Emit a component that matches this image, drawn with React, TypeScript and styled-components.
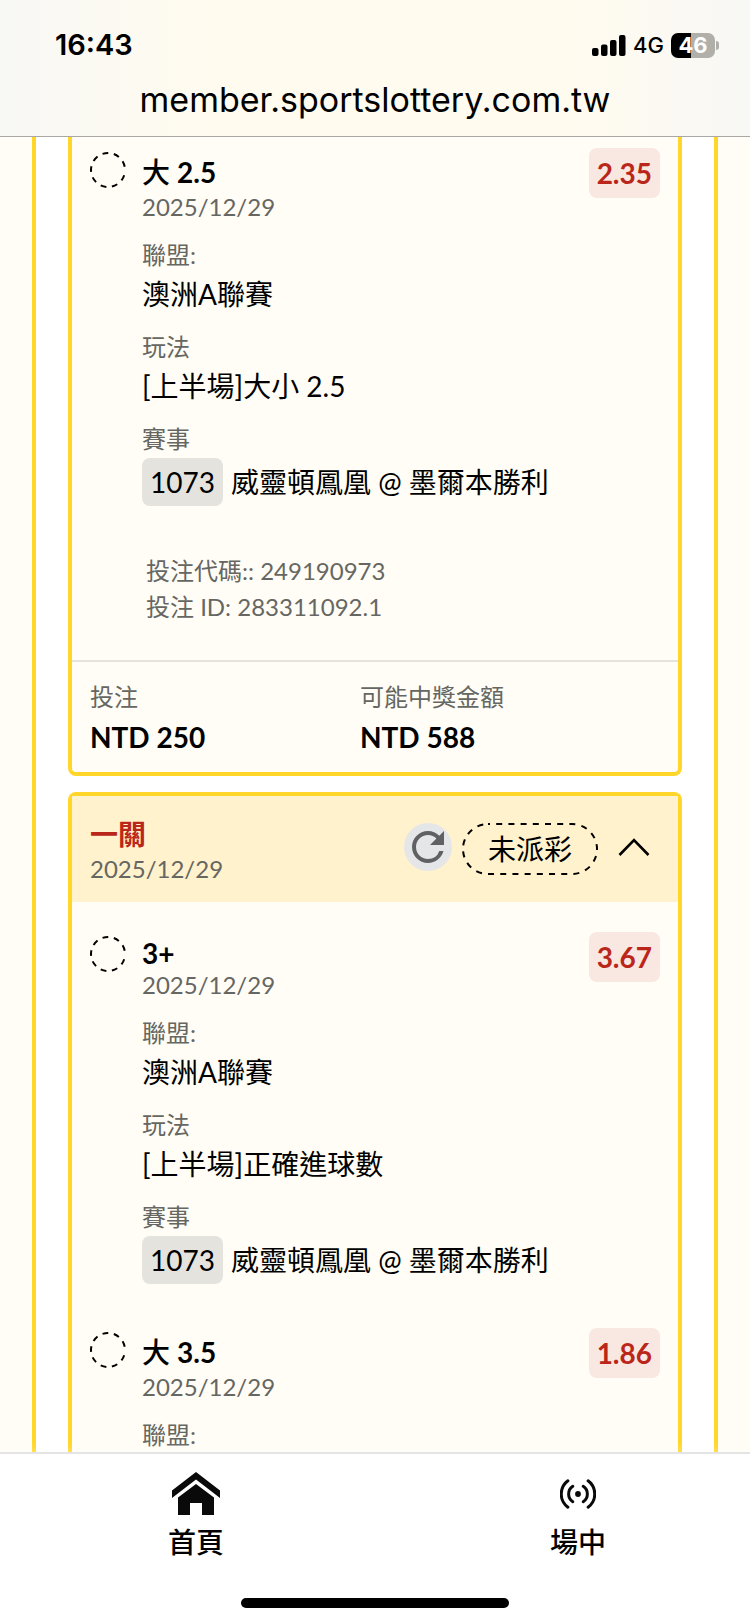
import React from 'react';
import styled, { createGlobalStyle } from 'styled-components';
import { MdRefresh } from 'react-icons/md';

const color = {
  page: '#fffdf5',
  yellow: '#ffd629',
  cream: '#fff2cc',
  red: '#bb261a',
  rose: '#f8e8e1',
  muted: '#666662',
  stone: '#e5e3dd',
  ink: '#000000',
};

const GlobalStyle = createGlobalStyle`
  *, *::before, *::after { box-sizing: border-box; }
  body {
    margin: 0;
    background: ${color.page};
    color: ${color.ink};
    font-family: Lato, "Noto Sans CJK TC", sans-serif;
    font-size: 28px;
    line-height: 40px;
  }
  h2, h3, p, dl, dd { margin: 0; }
  button { font: inherit; color: inherit; }
`;

const Screen = styled.div`
  display: flex;
  flex-direction: column;
  height: 100vh;
  overflow: hidden;
`;

/* ---------- browser chrome ---------- */

const TopBar = styled.header`
  flex: none;
  font-family: Inter, sans-serif;
  background: linear-gradient(90deg, #f8f8f5 0, #fffbef 30%, #fffbef 75%, #f8f8f5 100%);
  border-bottom: 1px solid #a9a8a5;
`;

const StatusRow = styled.div`
  display: flex;
  justify-content: space-between;
  align-items: center;
  padding: 25px 30px 0 55px;
`;

const Clock = styled.time`
  font-size: 29px;
  font-weight: 600;
`;

const StatusIcons = styled.div`
  display: flex;
  align-items: center;
  gap: 7px;
`;

const Network = styled.span`
  font-size: 22px;
  font-weight: 500;
`;

const Battery = styled.div`
  position: relative;
  width: 44px;
  height: 25px;
  margin-right: 5px;
  border-radius: 7px;
  background: linear-gradient(90deg, #000 46%, #b0afa9 46%);
  color: #fff;
  font-size: 22px;
  font-weight: 700;
  line-height: 25px;
  text-align: center;

  &::after {
    content: '';
    position: absolute;
    top: 8px;
    right: -4px;
    width: 3px;
    height: 9px;
    border-radius: 0 3px 3px 0;
    background: #b0afa9;
  }
`;

const Address = styled.p`
  padding: 15px 24px 16px;
  font-size: 34px;
  text-align: center;
`;

/* ---------- bet slips ---------- */

const Main = styled.main`
  display: flex;
  flex: 1;
  min-height: 0;
  overflow: hidden;
  padding: 0 32px;
`;

const Panel = styled.div`
  display: flex;
  flex: 1;
  flex-direction: column;
  gap: 16px;
  min-width: 0;
  padding: 0 32px;
  background: #fff;
  border: solid ${color.yellow};
  border-width: 0 4px;
`;

/* A slip can run past the top or the bottom edge of the scroll area. */
const Card = styled.section<{ $cut: 'top' | 'bottom' }>`
  flex: ${p => (p.$cut === 'bottom' ? '1 0 auto' : 'none')};
  background: ${color.page};
  border: 4px solid ${color.yellow};
  border-${p => p.$cut}-width: 0;
  border-radius: ${p => (p.$cut === 'top' ? '0 0 8px 8px' : '8px 8px 0 0')};
`;

const CardHeader = styled.div`
  display: flex;
  justify-content: space-between;
  align-items: center;
  padding: 18px;
  background: ${color.cream};
`;

const CardTitle = styled.h2`
  font-size: 28px;
  font-weight: 700;
  line-height: 40px;
  color: ${color.red};
`;

const DateText = styled.p`
  font-size: 24px;
  line-height: 30px;
  color: ${color.muted};
`;

const HeaderActions = styled.div`
  display: flex;
  align-items: flex-start;
  gap: 10px;
`;

const RefreshButton = styled.button`
  display: flex;
  width: 48px;
  height: 48px;
  padding: 0;
  border: 0;
  border-radius: 50%;
  background: #e5e6e8;
  color: #5f6162;
`;

const StatusPill = styled.span`
  position: relative;
  display: block;
  width: 136px;
  text-align: center;
  line-height: 52px;
`;

const PillOutline = styled.svg`
  position: absolute;
  inset: 0;
`;

const ToggleButton = styled.button`
  display: flex;
  align-items: center;
  justify-content: center;
  width: 52px;
  height: 48px;
  padding: 0;
  border: 0;
  background: none;
`;

const Selections = styled.div<{ $continued?: boolean }>`
  padding: ${p => (p.$continued ? 11 : 30)}px 18px 0;
`;

const SelectionRow = styled.article`
  display: flex;
  align-items: flex-start;
  gap: 16px;

  & + & { padding-top: 44px; }
`;

const StateRing = styled.svg`
  flex: none;
  margin-top: 4px;
`;

const SelectionBody = styled.div`
  flex: 1;
  min-width: 0;
  padding-top: 4px;
`;

const SelectionTitle = styled.h3<{ $latin: boolean }>`
  font-size: 28px;
  font-weight: 700;
  line-height: ${p => (p.$latin ? 34 : 40)}px;
`;

const Side = styled.span`
  font-weight: 500;
`;

const Details = styled.dl`
  display: grid;
  gap: 14px;
  padding-top: 16px;
`;

const Label = styled.dt`
  font-size: 24px;
  line-height: 34px;
  color: ${color.muted};
`;

const Value = styled.dd`
  line-height: 44px;
`;

const MatchLine = styled.dd`
  display: flex;
  align-items: center;
  gap: 8px;
  padding-top: 2px;
  line-height: 48px;
`;

const MatchNumber = styled.span`
  padding: 0 8px;
  border-radius: 8px;
  background: ${color.stone};
`;

const Odds = styled.strong`
  flex: none;
  padding: 0 8px;
  border-radius: 8px;
  background: ${color.rose};
  color: ${color.red};
  line-height: 50px;
`;

const Codes = styled.div`
  padding: 47px 74px 35px;
  font-size: 24px;
  line-height: 36px;
  color: ${color.muted};
`;

const Totals = styled.dl`
  display: grid;
  grid-template-columns: 9fr 10fr;
  padding: 18px 18px 12px;
  border-top: 2px solid ${color.stone};
`;

const Amount = styled.dd`
  font-weight: 700;
  line-height: 46px;
`;

/* ---------- bottom navigation ---------- */

const NavBar = styled.nav`
  position: relative;
  flex: none;
  background: #fff;
  border-top: 2px solid #e4e4e4;
  box-shadow: 0 -2px 10px rgba(255, 255, 255, 0.3);
`;

const NavItems = styled.div`
  display: flex;
  justify-content: space-between;
  padding: 16px 140px 0 164px;
`;

const NavLink = styled.a`
  display: flex;
  flex-direction: column;
  align-items: center;
  gap: 4px;
  width: 64px;
  color: inherit;
  font-weight: 500;
  text-decoration: none;
`;

const NavIcon = styled.span`
  display: flex;
  align-items: center;
  height: 48px;
`;

const HomeIndicator = styled.div`
  width: 268px;
  height: 10px;
  margin: 36px auto 16px;
  border-radius: 5px;
  background: #000;
`;

const Signal = () => (
  <svg width="34" height="21" viewBox="0 0 34 21" aria-hidden="true">
    <rect x="0" y="13" width="6.5" height="8" rx="2" />
    <rect x="9" y="9.5" width="6.5" height="11.5" rx="2" />
    <rect x="18" y="5" width="6.5" height="16" rx="2" />
    <rect x="27" y="0" width="6.5" height="21" rx="2" />
  </svg>
);

const HouseIcon = () => (
  <svg width="48" height="44" viewBox="0 0 48 44" fill="#0a0a0a" aria-hidden="true">
    <path d="M24 0 48 18.5V26L24 7.5 0 26v-7.5z" />
    <path d="M24 12 42 25.5V43H30V31H18v12H6V25.5z" />
  </svg>
);

const LiveIcon = () => (
  <svg width="36" height="30" viewBox="0 0 36 30" fill="none" stroke="#0a0a0a" strokeWidth="3" strokeLinecap="round" aria-hidden="true">
    <circle cx="18" cy="15" r="2.9" fill="#0a0a0a" stroke="none" />
    <path d="M12.8 7.3a9.2 9.2 0 0 0 0 15.4M23.2 7.3a9.2 9.2 0 0 1 0 15.4" />
    <path d="M7.9 1.8a16.4 16.4 0 0 0 0 26.4M28.1 1.8a16.4 16.4 0 0 1 0 26.4" />
  </svg>
);

const Ring = () => (
  <StateRing width="36" height="36" viewBox="0 0 36 36" fill="none" stroke="#000" strokeWidth="2" role="img" aria-label="未派彩">
    <circle cx="18" cy="18" r="17" strokeDasharray="5.8 5.66" strokeDashoffset="6.16" />
  </StateRing>
);

type Selection = {
  side?: string;
  line: string;
  date: string;
  odds: string;
  league?: string;
  market?: string;
  matchNo?: string;
  match?: string;
};

const game = { date: '2025/12/29', league: '澳洲A聯賽', matchNo: '1073', match: '威靈頓鳳凰 @ 墨爾本勝利' };
const settledSlip: Selection[] = [{ ...game, side: '大', line: '2.5', odds: '2.35', market: '[上半場]大小 2.5' }];
const openSlip: Selection[] = [
  { ...game, line: '3+', odds: '3.67', market: '[上半場]正確進球數' },
  { side: '大', line: '3.5', odds: '1.86', date: '2025/12/29' },
];

const SelectionItem = ({ item }: { item: Selection }) => (
  <SelectionRow>
    <Ring />
    <SelectionBody>
      <SelectionTitle $latin={!item.side}>
        {item.side && <Side>{item.side} </Side>}
        {item.line}
      </SelectionTitle>
      <DateText>{item.date}</DateText>
      <Details>
        <div>
          <Label>聯盟:</Label>
          {item.league && <Value>{item.league}</Value>}
        </div>
        {item.market && (
          <div>
            <Label>玩法</Label>
            <Value>{item.market}</Value>
          </div>
        )}
        {item.match && (
          <div>
            <Label>賽事</Label>
            <MatchLine>
              <MatchNumber>{item.matchNo}</MatchNumber>
              {item.match}
            </MatchLine>
          </div>
        )}
      </Details>
    </SelectionBody>
    <Odds>{item.odds}</Odds>
  </SelectionRow>
);

export default function App() {
  return (
    <Screen>
      <GlobalStyle />
      <TopBar>
        <StatusRow>
          <Clock>16:43</Clock>
          <StatusIcons>
            <Signal />
            <Network>4G</Network>
            <Battery>46</Battery>
          </StatusIcons>
        </StatusRow>
        <Address>member.sportslottery.com.tw</Address>
      </TopBar>

      <Main>
        <Panel>
          <Card $cut="top">
            <Selections $continued>
              {settledSlip.map(item => (
                <SelectionItem key={item.line} item={item} />
              ))}
            </Selections>
            <Codes>
              <p>投注代碼:: 249190973</p>
              <p>投注 ID: 283311092.1</p>
            </Codes>
            <Totals>
              <div>
                <Label>投注</Label>
                <Amount>NTD 250</Amount>
              </div>
              <div>
                <Label>可能中獎金額</Label>
                <Amount>NTD 588</Amount>
              </div>
            </Totals>
          </Card>

          <Card $cut="bottom">
            <CardHeader>
              <div>
                <CardTitle>一關</CardTitle>
                <DateText>2025/12/29</DateText>
              </div>
              <HeaderActions>
                <RefreshButton type="button" aria-label="重新整理">
                  <MdRefresh size={48} />
                </RefreshButton>
                <StatusPill>
                  <PillOutline width="136" height="52" fill="none" stroke="#000" strokeWidth="2" aria-hidden="true">
                    <rect x="1" y="1" width="134" height="50" rx="25" strokeDasharray="6 6.2" strokeDashoffset="4" />
                  </PillOutline>
                  未派彩
                </StatusPill>
                <ToggleButton type="button" aria-label="收合" aria-expanded="true">
                  <svg width="32" height="18" viewBox="0 0 32 18" fill="none" stroke="#000" strokeWidth="2.6" aria-hidden="true">
                    <path d="M1.5 17 16 2l14.500 15" />
                  </svg>
                </ToggleButton>
              </HeaderActions>
            </CardHeader>
            <Selections>
              {openSlip.map(item => (
                <SelectionItem key={item.line} item={item} />
              ))}
            </Selections>
          </Card>
        </Panel>
      </Main>

      <NavBar>
        <NavItems>
          <NavLink href="#home">
            <NavIcon><HouseIcon /></NavIcon>
            首頁
          </NavLink>
          <NavLink href="#live">
            <NavIcon><LiveIcon /></NavIcon>
            場中
          </NavLink>
        </NavItems>
        <HomeIndicator />
      </NavBar>
    </Screen>
  );
}
